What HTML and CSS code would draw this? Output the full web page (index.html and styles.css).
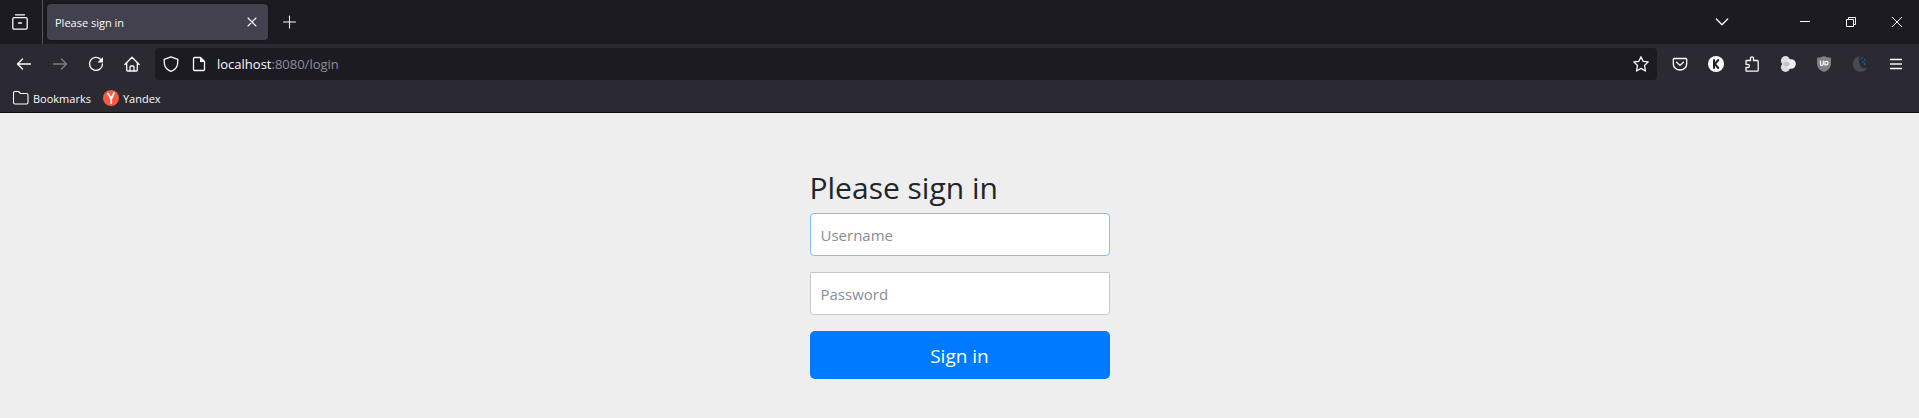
FILE: index.html
```html
<!DOCTYPE html>
<html lang="en">
<head>
<meta charset="utf-8">
<title>Please sign in</title>
<link rel="stylesheet" href="styles.css">
</head>
<body>
<header class="browser">
  <div class="tabbar">
    <button class="tool view" aria-label="Firefox View"><svg class="icon" viewBox="0 0 16 16"><path d="M3.5 .8h9M2.2 3.6h11.600q1.400 0 1.400 1.400v8.800q0 1.400-1.400 1.400H2.200Q.8 15.200 .8 13.800V5q0-1.400 1.400-1.400ZM6.500 9h3"/></svg></button>
    <div class="tab">
      <span class="tab-title">Please sign in</span>
      <button class="tab-close" aria-label="Close tab"><svg class="icon thin" viewBox="0 0 16 16"><path d="M4 4l8 8M12 4l-8 8"/></svg></button>
    </div>
    <button class="tool" aria-label="New tab"><svg class="icon thin" viewBox="0 0 16 16"><path d="M7.500 2v12M1.500 8h12"/></svg></button>
    <div class="window-controls">
      <button class="tool list-tabs" aria-label="List all tabs"><svg class="icon" viewBox="0 0 16 16"><path d="M2.300 5L8 10.700 13.700 5"/></svg></button>
      <button class="win" aria-label="Minimize"><svg class="icon crisp" viewBox="0 0 16 16"><path d="M4 7.500h10"/></svg></button>
      <button class="win" aria-label="Restore"><svg class="icon crisp" viewBox="0 0 16 16"><path d="M4.500 5.500h7v7h-7ZM6.500 5V3.500h7v7H12"/></svg></button>
      <button class="win" aria-label="Close"><svg class="icon crisp" viewBox="0 0 16 16"><path d="M4 3l10 10M14 3L4 13"/></svg></button>
    </div>
  </div>
  <nav class="navbar">
    <button class="tool" aria-label="Back"><svg class="icon" viewBox="0 0 16 16"><path d="M14.500 8H1.800M6.500 3L1.500 8l5 5"/></svg></button>
    <button class="tool" aria-label="Forward" disabled><svg class="icon" viewBox="0 0 16 16"><path d="M1.500 8h12.700M9.500 3l5 5-5 5"/></svg></button>
    <button class="tool" aria-label="Reload"><svg class="icon" viewBox="0 0 16 16"><path d="M12.800 3.500A6.500 6.500 0 1 0 14.500 8"/><path class="solid" d="M15 1v5.500H9.500Z"/></svg></button>
    <button class="tool" aria-label="Home"><svg class="icon" viewBox="0 0 16 16"><path d="M.8 8.500L8 1.300l7.200 7.200M2.700 7v7q0 1 1 1h8.600q1 0 1-1V7M6 15v-4q0-1 1-1h2q1 0 1 1v4"/></svg></button>
    <div class="urlbar">
      <svg class="icon" viewBox="0 0 16 16"><path d="M8 .8L14.800 3.300q.3 6.700-2.300 9.200Q10.800 14.300 8 15.300 5.200 14.300 3.500 12.500 .9 10 1.200 3.300Z"/></svg>
      <svg class="icon" viewBox="0 0 16 16"><path d="M3.500 1.500H9.500l4 4v8q0 1-1 1h-9q-1 0-1-1v-11q0-1 1-1Z"/><path class="solid" d="M9 1v5h5Z"/></svg>
      <span class="url"><b>localhost</b>:8080/login</span>
      <button class="star" aria-label="Bookmark this page"><svg class="icon" viewBox="0 0 16 16"><path d="M8 .8l2.100 4.500 5.100.6-3.700 3.600 1 5.500L8 12.400 3.500 15l1-5.500L.8 5.900l5.100-.6Z"/></svg></button>
    </div>
    <button class="tool" aria-label="Pocket"><svg class="icon" viewBox="0 0 16 16"><path d="M2.300 2.500h11.400q1 0 1 1V8a6.700 6 0 0 1-13.400 0V3.500q0-1 1-1ZM4.600 6.200L8 9.400l3.400-3.200"/></svg></button>
    <button class="tool" aria-label="Account K"><svg class="icon flat" viewBox="0 0 16 16"><circle cx="8" cy="8" r="8" fill="#fff"/><path d="M6 4v8M10.300 4L6.800 8l3.500 4" stroke="#222129" stroke-width="2"/></svg></button>
    <button class="tool" aria-label="Extensions"><svg class="icon" viewBox="0 0 16 16"><path d="M2 5.300q0-.8.800-.8H6.500V2.300a1.500 1.500 0 0 1 3 0V4.500h3.700q1 0 1 1v8.700q0 1-1 1H2.800q-.8 0-.8-.8V11.500H3.800a1.500 1.500 0 0 0 0-3.200H2Z"/></svg></button>
    <button class="tool" aria-label="Containers"><svg class="icon flat" viewBox="0 0 16 16"><circle cx="5.500" cy="4.700" r="4.600" fill="#dedede"/><circle cx="5.500" cy="11.300" r="4.600" fill="#dedede"/><circle cx="11" cy="8" r="4.800" fill="#f1f1f1"/><path d="M3 8q1.500-2.300 4-2.500 2.500.3 3 2.500-.5 2.300-3 2.500Q4.500 10.300 3 8Z" fill="#c4c4c4"/></svg></button>
    <button class="tool" aria-label="Content blocker"><svg class="icon flat" viewBox="0 0 16 16"><path d="M8 0Q10.500 1.700 15 1.800V8Q15 13 8 16 1 13 1 8V1.800Q5.500 1.700 8 0Z" fill="#808080"/><path d="M4.500 5v3q0 1.500 1.300 1.500T7.200 8V5M9 5.500v3.500h1q2 0 2-1.900T10 5.500Z" stroke="#fff" stroke-width="1.200"/></svg></button>
    <button class="tool" aria-label="Dark mode"><svg class="icon flat" viewBox="0 0 16 16"><path d="M7.500.5A7.700 7.700 0 1 0 15.300 12Q10 13 8 9.500 5.800 5 7.500.5Z" fill="#4a4a4a"/><path d="M9 1.500h1.500V3H9ZM12 3h1.500v1.500H12ZM10 5h1.500v1.500H10ZM12 7h1.500v2H12Z" fill="#0868a8"/></svg></button>
    <button class="tool" aria-label="Menu"><svg class="icon" viewBox="0 0 16 16"><path d="M2.500 3.500h11M2.500 8h11M2.500 12.500h11"/></svg></button>
  </nav>
  <div class="bookmarks">
    <a class="bookmark" href="#"><svg class="icon thin" viewBox="0 0 16 16"><path d="M2 1.500h3.500l2 2H13.500q1.500 0 1.500 1.500v7.500q0 1.500-1.500 1.500H2Q.5 14 .5 12.500V3Q.5 1.500 2 1.500Z"/></svg>Bookmarks</a>
    <a class="bookmark" href="#"><svg class="icon flat" viewBox="0 0 16 16"><circle cx="8" cy="8" r="8" fill="#fc5643"/><path d="M5 3.500L8.200 9M11 3L8.200 9v4" stroke="#fff" stroke-width="1.800"/></svg>Yandex</a>
  </div>
</header>
<main class="page">
  <form class="signin">
    <h2 class="heading">Please sign in</h2>
    <input class="field focused" type="text" placeholder="Username" aria-label="Username">
    <input class="field password" type="password" placeholder="Password" aria-label="Password">
    <button class="submit" type="submit">Sign in</button>
  </form>
</main>
</body>
</html>
```
FILE: styles.css
```css
* { box-sizing: border-box; }
body {
  margin: 0;
  min-height: 100vh;
  background: #eee;
  font-family: "Segoe UI", "Open Sans", "Noto Sans", sans-serif;
}
button { margin: 0; padding: 0; border: 0; background: none; color: inherit; font-family: inherit; }
.browser { background: #2b2a33; color: #fbfbfe; border-bottom: 1px solid #0c0c0d; font-size: 11px; }
.icon { display: block; flex: none; width: 16px; height: 16px; fill: none; stroke: currentColor; stroke-width: 1.3; stroke-linejoin: round; stroke-linecap: round; }
.icon.thin { stroke-width: 1.1; }
.icon.crisp { stroke-width: 1; stroke-linejoin: miter; stroke-linecap: butt; }
.icon.flat { stroke: none; }
.solid { fill: currentColor; stroke: none; }
.tool { display: flex; flex: none; align-items: center; justify-content: center; width: 36px; height: 32px; }
.tool:disabled { opacity: .4; }

.tabbar { display: flex; align-items: center; height: 44px; background: #1c1b22; }
.view { width: 43px; height: 44px; padding-right: 2px; border-right: 1px solid #55545d; }
.tab { display: flex; align-items: center; justify-content: space-between; width: 221px; height: 36px; margin: 0 4px; padding: 0 8px; border-radius: 4px; background: #42414d; box-shadow: 0 0 3px #111; }
.window-controls { display: flex; align-items: center; margin-left: auto; }
.list-tabs { margin-right: 41px; }
.win { display: flex; align-items: center; justify-content: center; width: 46px; height: 44px; }

.navbar { display: flex; align-items: center; height: 40px; padding: 0 5px 0 6px; }
.urlbar { display: flex; flex: 1; align-items: center; gap: 12px; height: 32px; margin: 0 5px; padding: 0 8px; border-radius: 4px; background: #1c1b22; }
.url { margin-left: -2px; font-size: 13px; color: #8f8f98; }
.url b { font-weight: 400; color: #fbfbfe; }
.star { margin-left: auto; }

.bookmarks { display: flex; gap: 12px; height: 28px; padding: 0 13px; }
.bookmark { display: flex; align-items: center; gap: 4px; color: inherit; text-decoration: none; }

.page { padding: 40px 15px; }
.signin { display: flex; flex-direction: column; gap: 16px; max-width: 300px; margin: 0 auto; padding-top: 16px; }
.heading { margin: 0 0 -10px; color: #212529; font-size: 30px; font-weight: 400; line-height: 38px; }
.field { width: 100%; height: 43px; padding: 0 10px; border: 1px solid #c8c8c8; border-radius: 4px; background: #fff; font: 15px/24px "Segoe UI", "Open Sans", "Noto Sans", sans-serif; }
.field::placeholder { color: #868e96; opacity: 1; }
.focused { border-color: #80bdff; }
.password { border-radius: 0 0 4px 4px; }
.submit { height: 48px; padding-top: 2px; border-radius: 5px; background: #007bff; color: #fff; font-size: 19px; line-height: 30px; }
```
